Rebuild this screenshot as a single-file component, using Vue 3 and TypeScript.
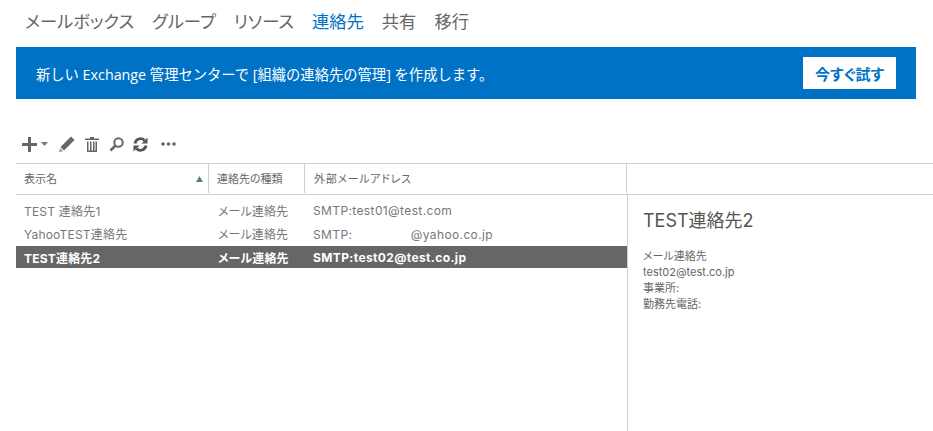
<script setup lang="ts">
const tabs = [
  { label: 'メールボックス', active: false },
  { label: 'グループ', active: false },
  { label: 'リソース', active: false },
  { label: '連絡先', active: true },
  { label: '共有', active: false },
  { label: '移行', active: false },
]
const rows = [
  { name: 'TEST 連絡先1', type: 'メール連絡先', mail: 'SMTP:test01@test.com', sel: false },
  { name: 'YahooTEST連絡先', type: 'メール連絡先', mail: 'SMTP:\u3000\u3000\u3000\u3000\u2002\u2009@yahoo.co.jp', sel: false },
  { name: 'TEST連絡先2', type: 'メール連絡先', mail: 'SMTP:test02@test.co.jp', sel: true },
]
</script>

<template>
  <div class="page">
    <nav class="tabs">
      <span v-for="t in tabs" :key="t.label" class="tab" :class="{ active: t.active }">{{ t.label }}</span>
    </nav>
    <div class="banner">
      <span class="banner-text">新しい Exchange 管理センターで [組織の連絡先の管理] を作成します。</span>
      <button class="try">今すぐ試す</button>
    </div>
    <div class="toolbar">
      <svg class="ic plus" width="15" height="15" viewBox="0 0 15 15"><path d="M0 6h6V0h3v6h6v3H9v6H6V9H0z" fill="#666"/></svg>
      <svg class="ic caret" width="7" height="4" viewBox="0 0 7 4"><path d="M0 0h7L3.5 4z" fill="#777"/></svg>
      <svg class="ic pencil" width="16" height="17" viewBox="0 0 16 17"><path d="M12 0.5l3.5 3.5L5 14.5 1.5 11z" fill="#666"/><path d="M1 12l3 3-4 1.500z" fill="#999"/></svg>
      <svg class="ic trash" width="14" height="15" viewBox="0 0 14 15"><path d="M5 0h4v1.500h5V3H0V1.500h5zM2 4.500h1.500V13.500h1.500V4.500h1.500V13.500h1.500V4.500h1.500V13.500h1V4.500H12V15H2z" fill="#666"/></svg>
      <svg class="ic search" width="15" height="15" viewBox="0 0 15 15"><circle cx="9.500" cy="5.500" r="4.200" fill="none" stroke="#666" stroke-width="2"/><path d="M6.500 8.500L1.500 13.500" stroke="#666" stroke-width="2.600"/></svg>
      <svg class="ic refresh" width="15" height="15" viewBox="0 0 15 15"><path d="M2 6.500A5.500 5.500 0 0 1 11.500 3.500" fill="none" stroke="#555" stroke-width="2.800"/><path d="M8.500 6.500L14.500 6.500V0.500z" fill="#555"/><path d="M13 8.500A5.500 5.500 0 0 1 3.500 11.500" fill="none" stroke="#555" stroke-width="2.800"/><path d="M6.500 8.500L0.500 8.500V14.500z" fill="#555"/></svg>
      <svg class="ic more" width="15" height="4" viewBox="0 0 15 4"><circle cx="2" cy="2" r="1.800" fill="#666"/><circle cx="7.500" cy="2" r="1.800" fill="#666"/><circle cx="13" cy="2" r="1.800" fill="#666"/></svg>
    </div>
    <div class="head">
      <div class="th c1">表示名<svg class="sort" width="7" height="6" viewBox="0 0 7 6"><path d="M3.500 0L7 6H0z" fill="#5f7f74"/></svg></div>
      <div class="th c2">連絡先の種類</div>
      <div class="th c3">外部メールアドレス</div>
      <div class="th c4"></div>
    </div>
    <div class="body">
      <div class="list">
        <div v-for="r in rows" :key="r.name" class="row" :class="{ sel: r.sel }">
          <span class="td c1">{{ r.name }}</span>
          <span class="td c2">{{ r.type }}</span>
          <span class="td c3">{{ r.mail }}</span>
        </div>
      </div>
      <aside class="detail">
        <h2>TEST連絡先2</h2>
        <p>メール連絡先</p>
        <p>test02@test.co.jp</p>
        <p>事業所:</p>
        <p>勤務先電話:</p>
      </aside>
    </div>
  </div>
</template>

<style>
html, body { margin: 0; background: #fff; overflow: hidden; }
</style>

<style scoped>
.page {
  width: 933px;
  height: 431px;
  overflow: hidden;
  display: flex;
  flex-direction: column;
  padding-left: 16px;
  box-sizing: border-box;
  font-family: Inter, "Noto Sans CJK JP", sans-serif;
  font-feature-settings: "palt";
  color: #666;
}
.tabs { display: flex; gap: 18px; height: 47px; padding: 10px 0 0 9px; box-sizing: border-box; }
.tab { font-size: 17.3px; line-height: 24px; color: #666; }
.tab.active { color: #0072c6; }
.banner {
  width: 900px;
  height: 52px;
  background: #0072c6;
  display: flex;
  align-items: center;
  justify-content: space-between;
  padding: 0 20px;
  box-sizing: border-box;
  flex: none;
}
.banner-text {
  color: #fff;
  font-family: "Open Sans", "Noto Sans CJK JP", sans-serif;
  font-feature-settings: normal;
  font-size: 14.3px;
}
.try {
  width: 93px;
  height: 32px;
  border: 0;
  background: #fff;
  color: #0072c6;
  font: 700 15px Inter, "Noto Sans CJK JP", sans-serif;
  font-feature-settings: "palt";
  padding: 0;
}
.toolbar { height: 64px; display: flex; align-items: center; padding: 26px 0 0 6px; box-sizing: border-box; flex: none; }
.ic { flex: none; display: block; }
.caret { margin-left: 4px; }
.pencil { margin-left: 11px; }
.trash { margin-left: 10px; }
.search { margin-left: 10px; }
.refresh { margin-left: 9px; }
.more { margin-left: 13px; }
.head {
  height: 32px;
  flex: none;
  display: flex;
  border-top: 1px solid #c8d2d0;
  border-bottom: 1px solid #c8d2d0;
  box-sizing: border-box;
}
.th {
  font-size: 11px;
  line-height: 30px;
  color: #666;
  box-sizing: border-box;
  padding-left: 8px;
  border-right: 1px solid #c8d2d0;
  height: 29px;
  position: relative;
}
.c1 { width: 193px; flex: none; }
.c2 { width: 96px; flex: none; }
.c3 { width: 322px; flex: none; }
.th.c3 { padding-left: 9px; letter-spacing: 0.7px; }
.th.c4 { border-right: 0; flex: 1; }
.sort { position: absolute; right: 5px; top: 12px; }
.body { flex: 1; display: flex; min-height: 0; }
.list { width: 611px; flex: none; padding-top: 5px; box-sizing: border-box; border-right: 0; }
.row { display: flex; height: 23px; padding-bottom: 2px; box-sizing: border-box; align-items: center; font-size: 12px; color: #777; }
.row.sel { height: 22px; padding-bottom: 0; background: #666; color: #fff; font-weight: 700; }
.td { box-sizing: border-box; padding-left: 8px; white-space: nowrap; }
.td.c1 { letter-spacing: 0.2px; }
.td.c2 { padding-left: 9px; letter-spacing: 0.1px; }
.td.c3 { padding-left: 8px; letter-spacing: 0.38px; }
.detail { flex: 1; border-left: 1px solid #c8d2d0; padding: 14px 0 0 15px; }
.detail h2 { margin: 0 0 15px; font-size: 18px; line-height: 24px; font-weight: 400; color: #555; }
.detail p { margin: 0; font-size: 11px; line-height: 16px; color: #666; }
</style>
